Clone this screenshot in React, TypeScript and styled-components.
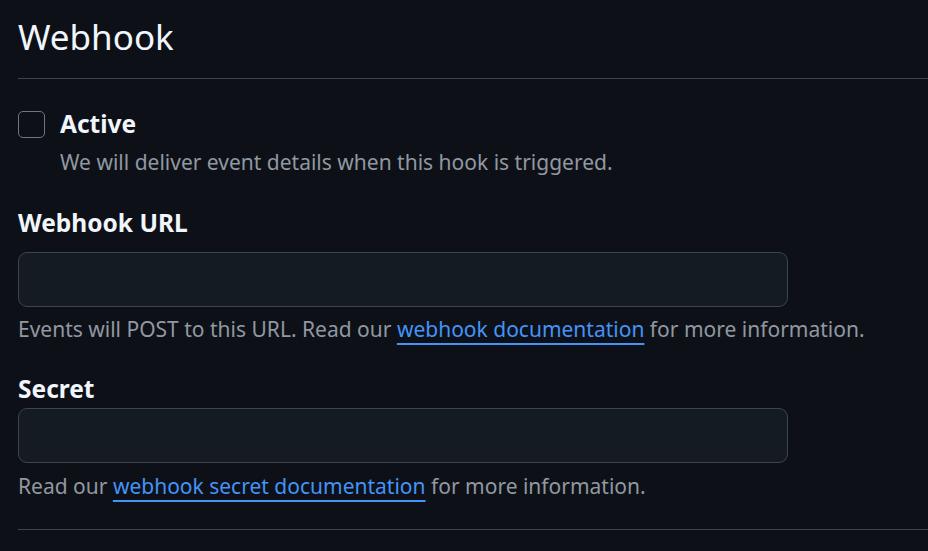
import React from 'react';
import styled, { createGlobalStyle } from 'styled-components';

const GlobalStyle = createGlobalStyle`
  html, body {
    margin: 0;
    padding: 0;
    background: #0d1117;
  }
  body {
    font-family: "Noto Sans", "Liberation Sans", sans-serif;
    color: #f0f6fc;
  }
`;

const Page = styled.div`
  padding: 13px 0 0 18px;
  width: 910px;
  height: 538px;
  overflow: hidden;
`;

const Subhead = styled.div`
  border-bottom: 1px solid #3d444d;
  padding-bottom: 17px;
  margin-bottom: 27px;
`;

const Title = styled.h2`
  margin: 0;
  font-size: 35px;
  font-weight: 400;
  line-height: 48px;
  color: #f0f6fc;
`;

const CheckRow = styled.label`
  display: flex;
  align-items: center;
  gap: 15px;
  cursor: pointer;
`;

const CheckBox = styled.span`
  width: 27px;
  height: 27px;
  box-sizing: border-box;
  border: 1px solid #6e7681;
  border-radius: 5px;
  background: #0d1117;
`;

const CheckLabel = styled.span`
  font-size: 24.5px;
  font-weight: 700;
  line-height: 36px;
`;

const Note = styled.p<{ $indent?: boolean; $top: number }>`
  margin: ${({ $top }) => $top}px 0 0 ${({ $indent }) => ($indent ? '42px' : '0')};
  font-size: 21px;
  line-height: 30px;
  color: #9198a1;
`;

const Group = styled.div<{ $top: number }>`
  margin-top: ${({ $top }) => $top}px;
`;

const FieldLabel = styled.div<{ $gap: number }>`
  font-size: 24.5px;
  font-weight: 700;
  line-height: 36px;
  margin-bottom: ${({ $gap }) => $gap}px;
`;

const Input = styled.input`
  display: block;
  box-sizing: border-box;
  width: 770px;
  height: 55px;
  padding: 0 16px;
  background: #151b23;
  border: 1px solid #3d444d;
  border-radius: 9px;
  color: #f0f6fc;
  font-family: inherit;
  font-size: 21px;
  outline: none;
`;

const Link = styled.a`
  color: #4493f8;
  text-decoration: underline;
  text-decoration-thickness: 2px;
  text-underline-offset: 6px;
`;

const Footer = styled.div`
  border-top: 1px solid #3d444d;
  margin-top: 28px;
`;

export default function App() {
  return (
    <>
      <GlobalStyle />
      <Page>
        <Subhead>
          <Title>Webhook</Title>
        </Subhead>

        <CheckRow>
          <CheckBox />
          <CheckLabel>Active</CheckLabel>
        </CheckRow>
        <Note $indent $top={5}>We will deliver event details when this hook is triggered.</Note>

        <Group $top={28}>
          <FieldLabel $gap={11}>Webhook URL</FieldLabel>
          <Input type="text" />
          <Note $top={7}>
            Events will POST to this URL. Read our <Link href="#">webhook documentation</Link> for more information.
          </Note>
        </Group>

        <Group $top={27}>
          <FieldLabel $gap={1}>Secret</FieldLabel>
          <Input type="password" />
          <Note $top={8}>
            Read our <Link href="#">webhook secret documentation</Link> for more information.
          </Note>
        </Group>

        <Footer />
      </Page>
    </>
  );
}
